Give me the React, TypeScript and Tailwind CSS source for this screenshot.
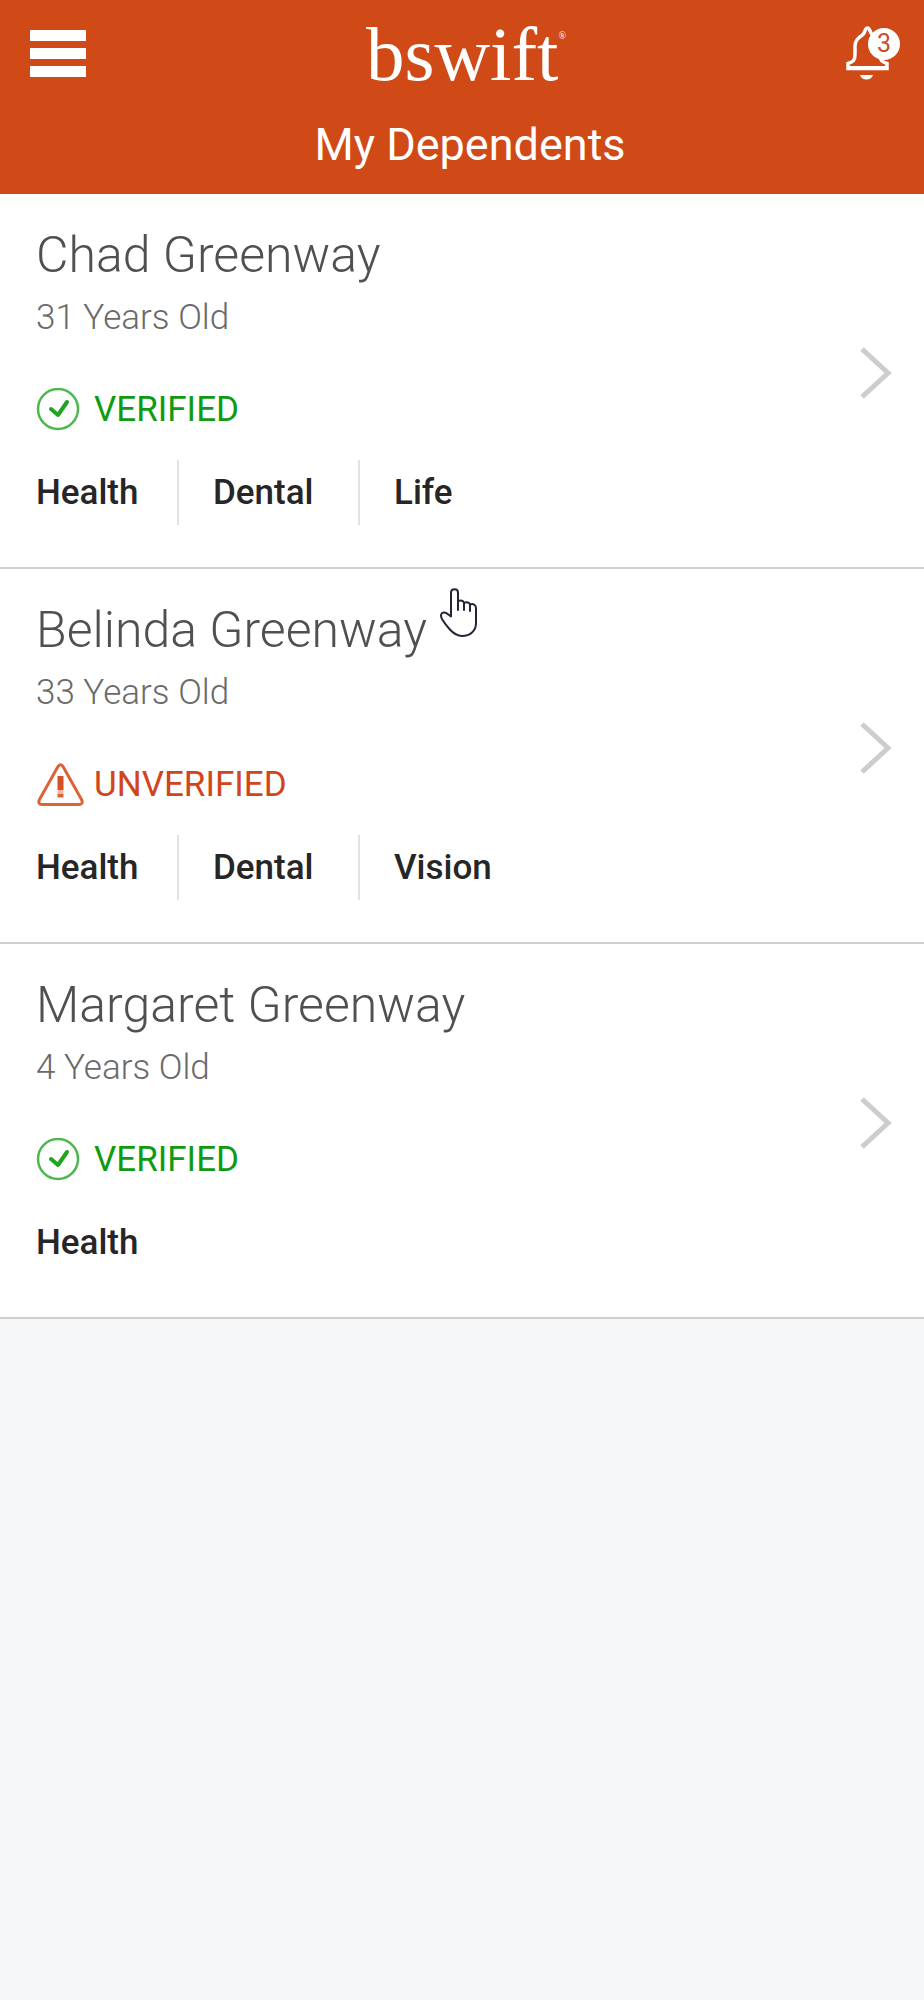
type Dependent = {
  id: number;
  name: string;
  age: number;
  verified: boolean;
  benefits: string[];
};

const dependents: Dependent[] = [
  {
    id: 1,
    name: "Chad Greenway",
    age: 31,
    verified: true,
    benefits: ["Health", "Dental", "Life"],
  },
  {
    id: 2,
    name: "Belinda Greenway",
    age: 33,
    verified: false,
    benefits: ["Health", "Dental", "Vision"],
  },
  {
    id: 3,
    name: "Margaret Greenway",
    age: 4,
    verified: true,
    benefits: ["Health"],
  },
];

function VerifiedIcon() {
  return (
    <svg width="46" height="44" viewBox="0 0 46 44" fill="none" aria-hidden="true">
      <circle cx="22" cy="21" r="20" stroke="#4db84d" strokeWidth="2.500" />
      <path
        d="M15 21l7 6L31 14"
        stroke="#21a321"
        strokeWidth="4"
        strokeLinecap="round"
        strokeLinejoin="round"
      />
    </svg>
  );
}

function WarningIcon() {
  return (
    <svg width="48" height="44" viewBox="0 0 48 44" fill="none" aria-hidden="true">
      <path
        d="M22 3.500L3.500 36.500c-1.500 3-.5 5 2.500 5h37c3 0 4-2 2.500-5L27 3.500c-1.200-2.300-3.800-2.300-5 0z"
        stroke="#dc6238"
        strokeWidth="3"
        strokeLinejoin="round"
      />
      <path d="M21.500 13h6v14h-6z" fill="#d65224" />
      <path d="M21.500 27h6v4h-6z" fill="#f0b8a3" />
      <path d="M21.500 31h6v3.500h-6z" fill="#dc6238" />
    </svg>
  );
}

function BellIcon() {
  return (
    <svg width="54" height="56" viewBox="0 0 54 56" fill="none" aria-hidden="true">
      <path
        d="M2 44.500V39.500c5-1.500 7-3 7-9V22c0-6 4-8.500 8-11.500 2-2 2-6.500 4.500-6.500s2.500 4.500 4.500 6.500c4 3 8 5.500 8 11.500v8.500c0 6 2 7.500 7 9v5z"
        stroke="#fff"
        strokeWidth="3.500"
      />
      <path d="M2 42h39v4H2z" fill="#fff" />
      <path d="M14 51h13c-1 3-3.500 4.500-6.500 4.500S15 54 14 51z" fill="#fff" />
    </svg>
  );
}

function Chevron() {
  return (
    <svg
      width="32"
      height="52"
      viewBox="0 0 32 52"
      fill="none"
      className="mb-4 shrink-0"
      aria-hidden="true"
    >
      <path d="M2 2l26 24L2 50" stroke="#cdcdcd" strokeWidth="5" />
    </svg>
  );
}

function Pointer() {
  return (
    <svg
      width="38"
      height="50"
      viewBox="0 0 38 50"
      fill="#fff"
      stroke="#25253a"
      strokeWidth="2"
      strokeLinecap="round"
      strokeLinejoin="round"
      className="absolute left-[440px] top-[394px] pointer-events-none"
      aria-hidden="true"
    >
      <path d="M11 28.500V4.500c0-4.500 7-4.500 7 0V13c3-1 5.500-.5 6 2 3-1.500 5.500-.5 6 1.500 3-1 6 0 6 3.500v15c0 8-6 13-14 13-6 0-9.500-3.500-13-7.500-3-3.500-5-6-7-9.500-1.500-3-1.500-6 1.500-6.500 3-.5 4.500 2 7.500 4z" />
      <path d="M18 13v9M24 15v7M30 16.500V23" fill="none" />
    </svg>
  );
}

function DependentRow({ name, age, verified, benefits }: Omit<Dependent, "id">) {
  return (
    <li className="border-b-2 border-[#cfcfcf] bg-white">
      <a href="#" className="flex items-center justify-between pl-9 pr-8">
        <div className="pt-[30px] pb-[42px]">
          <h2 className="text-[50px] leading-[62px] font-light text-[#505050]">
            {name}
          </h2>
          <p className="mt-2 text-[35px] leading-[48px] font-light text-[#6a6a6a]">
            {age} Years Old
          </p>

          <div className="mt-11 flex items-center gap-[10px]">
            <span className="flex w-12">
              {verified ? <VerifiedIcon /> : <WarningIcon />}
            </span>
            {verified ? (
              <span className="text-[35px] leading-[48px] text-[#0f9b0f]">
                VERIFIED
              </span>
            ) : (
              <span className="text-[35px] leading-[48px] text-[#d0451b]">
                UNVERIFIED
              </span>
            )}
          </div>

          <ul className="mt-[26px] grid grid-cols-[141px_181px_auto] text-[35px] leading-[65px] font-medium text-[#262626]">
            {benefits.map((benefit, index) => (
              <li
                key={benefit}
                className={index > 0 ? "border-l-2 border-[#e2e2e2] pl-[34px]" : ""}
              >
                {benefit}
              </li>
            ))}
          </ul>
        </div>

        <Chevron />
      </a>
    </li>
  );
}

export default function App() {
  return (
    <div className="min-h-screen bg-[#f6f7f9] font-['Roboto',sans-serif]">
      <header className="bg-[#d04a18] text-white">
        <div className="flex h-[108px] items-start justify-between pl-[30px] pr-6">
          <button
            type="button"
            aria-label="Menu"
            className="mt-[30px] flex w-14 flex-col gap-[7px]"
          >
            <span className="h-[11px] w-full bg-white" />
            <span className="h-[11px] w-full bg-white" />
            <span className="h-[11px] w-full bg-white" />
          </button>

          <a
            href="#"
            className="flex items-start font-['Liberation_Serif',serif] text-[77px] leading-[108px]"
          >
            bswift
            <span className="mt-7 text-[10px] leading-4">®</span>
          </a>

          <button type="button" aria-label="Notifications" className="relative mt-6">
            <BellIcon />
            <span className="absolute left-[22px] top-1 flex size-8 items-center justify-center rounded-full bg-white text-[25px] text-[#c4502c]">
              3
            </span>
          </button>
        </div>

        <h1 className="pt-[13px] pb-[25px] pl-4 text-center text-[45px] leading-[48px]">
          My Dependents
        </h1>
      </header>

      <main className="relative">
        <ul>
          {dependents.map(({ id, ...dependent }) => (
            <DependentRow key={id} {...dependent} />
          ))}
        </ul>
        <Pointer />
      </main>
    </div>
  );
}
